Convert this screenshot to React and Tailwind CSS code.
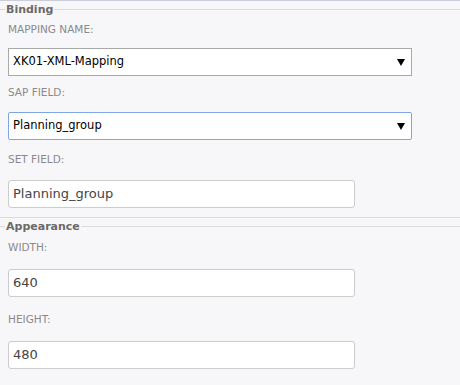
import React from "react";

function Legend({ children }) {
  return (
    <div className="flex items-center h-[13px]">
      <div className="w-[5px] h-px bg-[#dcdcdc]" />
      <span className="px-[1px] text-[11px] leading-[13px] font-bold text-[#6a6a6a]">{children}</span>
      <div className="flex-1 h-px bg-[#dcdcdc]" />
    </div>
  );
}

function Label({ children, mt }) {
  return (
    <div className={`text-[10.5px] leading-[13px] text-[#8a8a8a] pl-[8px] ${mt}`}>{children}</div>
  );
}

function Select({ value, focus, mt }) {
  return (
    <div
      className={`ml-[8px] w-[404px] h-[28px] bg-white flex items-center justify-between pl-[4px] pr-[6px] ${mt} ${
        focus ? "border border-[#7ea5e6] rounded-[2px]" : "border border-[#a9a9a9]"
      }`}
    >
      <span className="text-[11.5px] text-black">{value}</span>
      <svg width="8" height="7" viewBox="0 0 8 7" className="mt-[1px]">
        <path d="M0 0 H8 L4 7 Z" fill="#000" />
      </svg>
    </div>
  );
}

function Input({ value, mt }) {
  return (
    <div
      className={`ml-[8px] w-[347px] h-[28px] bg-white border border-[#cccccc] rounded-[3px] flex items-center pl-[4px] ${mt}`}
    >
      <span className="text-[13px] text-[#444]">{value}</span>
    </div>
  );
}

export default function App() {
  return (
    <div
      className="w-[460px] h-[385px] bg-[#f7f7f9] border-t border-[#c9ced8] overflow-hidden"
      style={{ fontFamily: '"DejaVu Sans", Verdana, sans-serif' }}
    >
      <div className="mt-[2px]">
        <Legend>Binding</Legend>
      </div>
      <Label mt="mt-[7px]">MAPPING NAME:</Label>
      <Select value="XK01-XML-Mapping" mt="mt-[12px]" />
      <Label mt="mt-[10px]">SAP FIELD:</Label>
      <Select value="Planning_group" focus mt="mt-[13px]" />
      <Label mt="mt-[13px]">SET FIELD:</Label>
      <Input value="Planning_group" mt="mt-[14px]" />
      <div className="mt-[9px] h-px bg-[#dcdcdc]" />
      <div className="mt-[2px]">
        <Legend>Appearance</Legend>
      </div>
      <Label mt="mt-[8px]">WIDTH:</Label>
      <Input value="640" mt="mt-[15px]" />
      <Label mt="mt-[16px]">HEIGHT:</Label>
      <Input value="480" mt="mt-[15px]" />
    </div>
  );
}
